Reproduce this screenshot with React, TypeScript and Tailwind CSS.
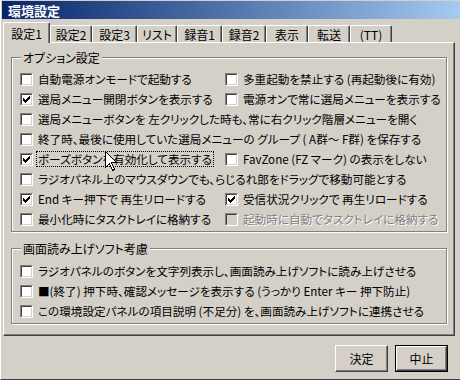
import React from 'react';

type Opt = {
  label: string;
  checked?: boolean;
  disabled?: boolean;
  focused?: boolean;
  wide?: boolean;
};

const tabs: [string, number][] = [
  ['設定1', 47],
  ['設定2', 42],
  ['設定3', 45],
  ['リスト', 40],
  ['録音1', 45],
  ['録音2', 44],
  ['表示', 42],
  ['転送', 42],
  ['(TT)', 42],
];

const options: Opt[] = [
  { label: '自動電源オンモードで起動する' },
  { label: '多重起動を禁止する (再起動後に有効)' },
  { label: '選局メニュー開閉ボタンを表示する', checked: true },
  { label: '電源オンで常に選局メニューを表示する' },
  { label: '選局メニューボタンを 左クリックした時も、常に右クリック階層メニューを開く', wide: true },
  { label: '終了時、最後に使用していた選局メニューの グループ ( A群～ F群) を保存する', wide: true },
  { label: 'ポーズボタンを有効化して表示する', checked: true, focused: true },
  { label: 'FavZone (FZ マーク) の表示をしない' },
  { label: 'ラジオパネル上のマウスダウンでも、らじるれ郎をドラッグで移動可能とする', wide: true },
  { label: 'End キー押下で 再生リロードする', checked: true },
  { label: '受信状況クリックで 再生リロードする', checked: true },
  { label: '最小化時にタスクトレイに格納する' },
  { label: '起動時に自動でタスクトレイに格納する', disabled: true },
];

const readerOptions: Opt[] = [
  { label: 'ラジオパネルのボタンを文字列表示し、画面読み上げソフトに読み上げさせる', wide: true },
  { label: '■(終了) 押下時、確認メッセージを表示する (うっかり Enter キー 押下防止)', wide: true },
  { label: 'この環境設定パネルの項目説明 (不足分) を、画面読み上げソフトに連携させる', wide: true },
];

// classic 7x7 check mark, one column at a time
const checkCols = [2, 3, 4, 3, 2, 1, 0];

const CheckBox = ({ checked, disabled }: { checked?: boolean; disabled?: boolean }) => (
  <span className="block w-[13px] h-[13px] shrink-0 border border-t-[#808080] border-l-[#808080] border-b-white border-r-white">
    <span
      className={`flex items-center justify-center w-full h-full border border-t-[#404040] border-l-[#404040] border-b-[#d4d0c8] border-r-[#d4d0c8] ${
        disabled ? 'bg-[#d4d0c8]' : 'bg-white'
      }`}
    >
      {checked && (
        <svg width="7" height="7" viewBox="0 0 7 7" shapeRendering="crispEdges">
          {checkCols.map((y, x) => (
            <rect key={x} x={x} y={y} width="1" height="3" fill="#000" />
          ))}
        </svg>
      )}
    </span>
  </span>
);

const OptionRow = ({ opt }: { opt: Opt }) => (
  <div className={`flex items-center h-[20px] gap-[4px] ${opt.wide ? 'col-span-2' : ''}`}>
    <CheckBox checked={opt.checked} disabled={opt.disabled} />
    <span
      className={`whitespace-nowrap text-[11.6px] leading-[14px] px-[1px] ${
        opt.focused ? 'outline outline-1 outline-dotted outline-black' : ''
      } ${opt.disabled ? 'text-[#808080] [text-shadow:1px_1px_0_#fff]' : 'text-black'}`}
    >
      {opt.label}
    </span>
  </div>
);

const GroupBox = ({ title, className, children }: { title: string; className: string; children: React.ReactNode }) => (
  <div className={`w-[436px] border border-[#808080] shadow-[inset_1px_1px_#fff,1px_1px_#fff] ${className}`}>
    <div className="flex -mt-[8px] ml-[9px]">
      <span className="relative px-[2px] bg-[#d4d0c8] leading-[15px]">{title}</span>
    </div>
    {children}
  </div>
);

const Button = ({ label, isDefault }: { label: string; isDefault?: boolean }) => (
  <div className={`w-[53px] h-[27px] ${isDefault ? 'border border-black' : ''}`}>
    <button className="w-full h-full flex items-center justify-center bg-[#d4d0c8] border border-t-white border-l-white border-r-[#404040] border-b-[#404040] shadow-[inset_-1px_-1px_#808080] text-[12px] text-black">
      {label}
    </button>
  </div>
);

const App: React.FC = () => {
  return (
    <div className="relative w-[460px] h-[380px] overflow-hidden bg-[#d4d0c8] border-l border-t border-l-white border-t-[#d4d0c8] border-b border-b-[#404040] font-['Noto_Sans_CJK_JP','Noto_Sans',sans-serif] [font-feature-settings:'palt'] text-[12px] text-black">
      {/* title bar */}
      <div className="h-[18px] ml-[1px] flex items-center pl-[6px] bg-linear-to-r from-[#0a246a] to-[#a6caf0]">
        <span className="text-white font-bold text-[13px] leading-none">環境設定</span>
      </div>

      {/* tabs */}
      <div className="flex items-end h-[23px] ml-[2px]">
        {tabs.map(([name, w], i) =>
          i === 0 ? (
            <div
              key={name}
              style={{ width: w }}
              className="relative z-10 -mb-px h-[21px] flex justify-center pt-[3px] bg-[#d4d0c8] border-l border-t border-r border-l-white border-t-white border-r-[#404040] shadow-[inset_-1px_0_#808080] rounded-t-[2px] leading-[15px]"
            >
              {name}
            </div>
          ) : (
            <div
              key={name}
              style={{ width: w }}
              className="h-[17px] flex justify-center pt-[1px] border-l border-t border-r border-l-white border-t-white border-r-[#404040] shadow-[inset_-1px_0_#808080] rounded-t-[2px] leading-[15px]"
            >
              {name}
            </div>
          )
        )}
      </div>

      {/* tab panel */}
      <div className="w-[452px] h-[294px] ml-[2px] pt-[14px] pl-[7px] border border-t-white border-l-white border-r-[#404040] border-b-[#404040] shadow-[inset_-1px_-1px_#808080]">
        <GroupBox title="オプション設定" className="h-[175px]">
          <div className="grid grid-cols-[205px_1fr] mt-[4px] pl-[8px]">
            {options.map((o) => (
              <OptionRow key={o.label} opt={o} />
            ))}
          </div>
        </GroupBox>
        <GroupBox title="画面読み上げソフト考慮" className="h-[76px] mt-[16px]">
          <div className="grid grid-cols-[205px_1fr] mt-[5px] pl-[8px]">
            {readerOptions.map((o) => (
              <OptionRow key={o.label} opt={o} />
            ))}
          </div>
        </GroupBox>
      </div>

      {/* buttons */}
      <div className="flex gap-[7px] mt-[9px] ml-[334px]">
        <Button label="決定" />
        <Button label="中止" isDefault />
      </div>

      {/* mouse pointer */}
      <svg className="absolute left-[104px] top-[150px]" width="13" height="21" viewBox="0 0 13 21" shapeRendering="crispEdges">
        <path d="M0.5 0.5 L0.5 16.5 L4.5 12.5 L7.5 19.5 L9.5 18.5 L6.5 11.5 L11.5 11.5 Z" fill="#fff" stroke="#000" strokeWidth="1" />
      </svg>
    </div>
  );
};

export default App;
